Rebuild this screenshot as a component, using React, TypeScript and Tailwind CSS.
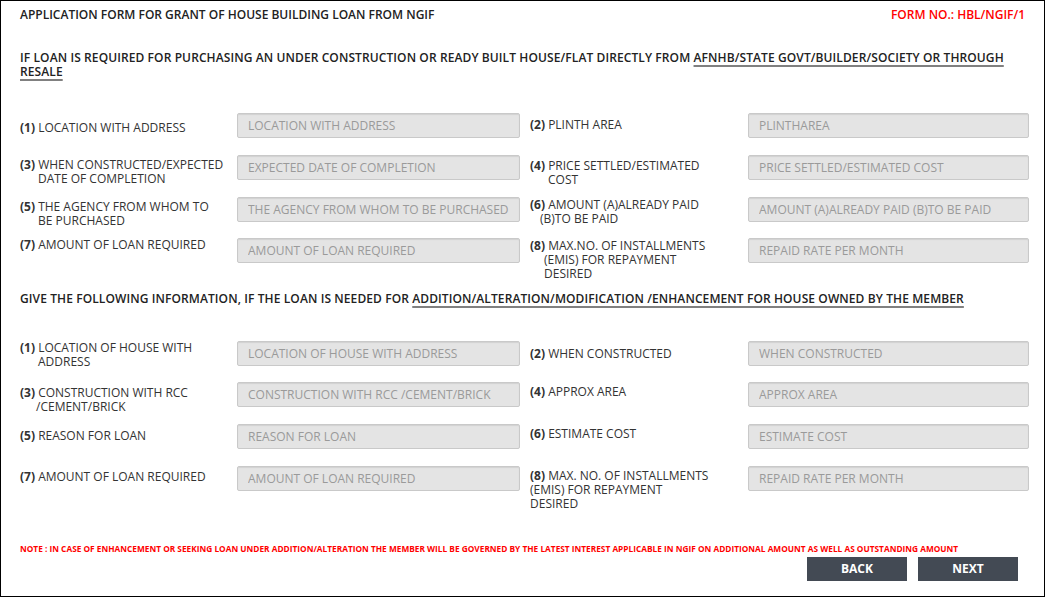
import React from 'react'

interface Field {
  num: string
  label: React.ReactNode
  placeholder: string
  labelPad: string
}

interface RowData {
  left: Field
  right: Field
  height: string
}

const partOne: RowData[] = [
  {
    height: 'h-[42px]',
    left: { num: '(1)', label: 'LOCATION WITH ADDRESS', placeholder: 'LOCATION WITH ADDRESS', labelPad: 'pt-[8px]' },
    right: { num: '(2)', label: 'PLINTH AREA', placeholder: 'PLINTHAREA', labelPad: 'pt-[5px]' },
  },
  {
    height: 'h-[42px]',
    left: { num: '(3)', label: <>WHEN CONSTRUCTED/EXPECTED<br /><span className="pl-[18px]">DATE OF COMPLETION</span></>, placeholder: 'EXPECTED DATE OF COMPLETION', labelPad: 'pt-[3px]' },
    right: { num: '(4)', label: <>PRICE SETTLED/ESTIMATED<br /><span className="pl-[18px]">COST</span></>, placeholder: 'PRICE SETTLED/ESTIMATED COST', labelPad: 'pt-[4px]' },
  },
  {
    height: 'h-[41px]',
    left: { num: '(5)', label: <>THE AGENCY FROM WHOM TO<br /><span className="pl-[18px]">BE PURCHASED</span></>, placeholder: 'THE AGENCY FROM WHOM TO BE PURCHASED', labelPad: 'pt-[3px]' },
    right: { num: '(6)', label: <>AMOUNT (A)ALREADY PAID<br /><span className="pl-[10px]">(B)TO BE PAID</span></>, placeholder: 'AMOUNT (A)ALREADY PAID (B)TO BE PAID', labelPad: 'pt-[1px]' },
  },
  {
    height: 'h-[50px]',
    left: { num: '(7)', label: 'AMOUNT OF LOAN REQUIRED', placeholder: 'AMOUNT OF LOAN REQUIRED', labelPad: 'pt-0' },
    right: { num: '(8)', label: <>MAX.NO. OF INSTALLMENTS<br /><span className="pl-[14px]">(EMIS) FOR REPAYMENT</span><br /><span className="pl-[14px]">DESIRED</span></>, placeholder: 'REPAID RATE PER MONTH', labelPad: 'pt-[1px]' },
  },
]

const partTwo: RowData[] = [
  {
    height: 'h-[41px]',
    left: { num: '(1)', label: <>LOCATION OF HOUSE WITH<br /><span className="pl-[18px]">ADDRESS</span></>, placeholder: 'LOCATION OF HOUSE WITH ADDRESS', labelPad: 'pt-0' },
    right: { num: '(2)', label: 'WHEN CONSTRUCTED', placeholder: 'WHEN CONSTRUCTED', labelPad: 'pt-[6px]' },
  },
  {
    height: 'h-[42px]',
    left: { num: '(3)', label: <>CONSTRUCTION WITH RCC<br /><span className="pl-[16px]">/CEMENT/BRICK</span></>, placeholder: 'CONSTRUCTION WITH RCC /CEMENT/BRICK', labelPad: 'pt-[4px]' },
    right: { num: '(4)', label: 'APPROX AREA', placeholder: 'APPROX AREA', labelPad: 'pt-[3px]' },
  },
  {
    height: 'h-[42px]',
    left: { num: '(5)', label: 'REASON FOR LOAN', placeholder: 'REASON FOR LOAN', labelPad: 'pt-[5px]' },
    right: { num: '(6)', label: 'ESTIMATE COST', placeholder: 'ESTIMATE COST', labelPad: 'pt-[3px]' },
  },
  {
    height: 'h-[54px]',
    left: { num: '(7)', label: 'AMOUNT OF LOAN REQUIRED', placeholder: 'AMOUNT OF LOAN REQUIRED', labelPad: 'pt-[4px]' },
    right: { num: '(8)', label: <>MAX. NO. OF INSTALLMENTS<br />(EMIS) FOR REPAYMENT<br />DESIRED</>, placeholder: 'REPAID RATE PER MONTH', labelPad: 'pt-[3px]' },
  },
]

function FieldLabel({ field, width }: { field: Field; width: string }) {
  return (
    <div className={`${width} ${field.labelPad} shrink-0 text-[12px] leading-[14px] text-[#333]`}>
      <span className="font-bold">{field.num}</span> {field.label}
    </div>
  )
}

function FieldInput({ placeholder, width }: { placeholder: string; width: string }) {
  return (
    <input
      readOnly
      placeholder={placeholder}
      className={`${width} h-[25px] shrink-0 rounded-[2px] border border-[#c9c9c9] bg-[#e4e4e4] px-[10px] text-[12px] text-[#333] shadow-[inset_0_1px_1px_rgba(0,0,0,0.08)] outline-none placeholder:text-[#9a9a9a]`}
    />
  )
}

function FormRow({ row }: { row: RowData }) {
  return (
    <div className={`flex items-start ${row.height}`}>
      <FieldLabel field={row.left} width="w-[217px]" />
      <FieldInput placeholder={row.left.placeholder} width="w-[283px]" />
      <div className="w-[10px] shrink-0" />
      <FieldLabel field={row.right} width="w-[218px]" />
      <FieldInput placeholder={row.right.placeholder} width="w-[281px]" />
    </div>
  )
}

export default function App() {
  return (
    <div
      className="box-border flex h-[597px] w-[1045px] flex-col border border-black bg-white px-[19px]"
      style={{ fontFamily: '"Open Sans", "Noto Sans", sans-serif' }}
    >
      {/* header */}
      <div className="flex h-[27px] items-center justify-between pt-[1px] text-[12px] font-semibold">
        <span className="text-[#222]">APPLICATION FORM FOR GRANT OF HOUSE BUILDING LOAN FROM NGIF</span>
        <span className="text-[#ff0000]">FORM NO.: HBL/NGIF/1</span>
      </div>

      <p className="mt-[23px] text-[12px] font-semibold leading-[14px] tracking-[0.1px] text-[#222]">
        IF LOAN IS REQUIRED FOR PURCHASING AN UNDER CONSTRUCTION OR READY BUILT HOUSE/FLAT DIRECTLY FROM{' '}
        <span className="underline decoration-[#808080] decoration-2 underline-offset-[3px]">
          AFNHB/STATE GOVT/BUILDER/SOCIETY OR THROUGH RESALE
        </span>
      </p>

      <div className="mt-[34px] flex flex-col">
        {partOne.map((row, i) => (
          <FormRow key={i} row={row} />
        ))}
      </div>

      <p className="mt-[4px] text-[12px] font-semibold leading-[14px] tracking-[0.1px] text-[#222]">
        GIVE THE FOLLOWING INFORMATION, IF THE LOAN IS NEEDED FOR{' '}
        <span className="underline decoration-[#808080] decoration-2 underline-offset-[3px]">
          ADDITION/ALTERATION/MODIFICATION /ENHANCEMENT FOR HOUSE OWNED BY THE MEMBER
        </span>
      </p>

      <div className="mt-[35px] flex flex-col">
        {partTwo.map((row, i) => (
          <FormRow key={i} row={row} />
        ))}
      </div>

      <p className="mt-[24px] text-[8.3px] font-bold leading-[10px] text-[#ff0000]">
        NOTE : IN CASE OF ENHANCEMENT OR SEEKING LOAN UNDER ADDITION/ALTERATION THE MEMBER WILL BE GOVERNED BY THE LATEST INTEREST APPLICABLE IN NGIF ON ADDITIONAL AMOUNT AS WELL AS OUTSTANDING AMOUNT
      </p>

      <div className="mt-[3px] flex justify-end gap-[11px] pr-[7px]">
        <button className="h-[24px] w-[100px] bg-[#434a54] text-[12px] font-bold text-white">BACK</button>
        <button className="h-[24px] w-[100px] bg-[#434a54] text-[12px] font-bold text-white">NEXT</button>
      </div>
    </div>
  )
}
